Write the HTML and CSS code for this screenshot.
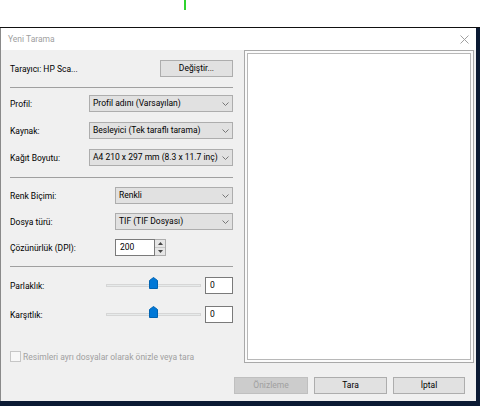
FILE: index.html
```html
<!DOCTYPE html>
<html lang="tr">
<head>
<meta charset="utf-8">
<title>Yeni Tarama</title>
<link rel="stylesheet" href="styles.css">
</head>
<body>
<div class="topstrip"><span class="green"></span></div>
<div class="screen">
  <div class="dialog">
    <div class="titlebar">
      <span class="title">Yeni Tarama</span>
      <svg class="close" width="9" height="9" viewBox="0 0 9 9"><path d="M0.5 0.5 L8.5 8.5 M8.5 0.5 L0.5 8.5" stroke="#a0a0a0" stroke-width="1"/></svg>
    </div>
    <div class="body">
      <div class="main">
        <div class="left">
          <div class="row scanner">
            <span class="label">Tarayıcı: HP Sca...</span>
            <button class="btn change">Değiştir...</button>
          </div>
          <div class="sep"></div>
          <div class="group g1">
            <span class="label">Profil:</span>
            <div class="select">Profil adını (Varsayılan)<svg class="chev" width="7" height="4" viewBox="0 0 7 4"><path d="M0.5 0.5 L3.5 3.5 L6.5 0.5" fill="none" stroke="#777" stroke-width="1"/></svg></div>
            <span class="label">Kaynak:</span>
            <div class="select">Besleyici (Tek taraflı tarama)<svg class="chev" width="7" height="4" viewBox="0 0 7 4"><path d="M0.5 0.5 L3.5 3.5 L6.5 0.5" fill="none" stroke="#777" stroke-width="1"/></svg></div>
            <span class="label">Kağıt Boyutu:</span>
            <div class="select">A4 210 x 297 mm (8.3 x 11.7 inç)<svg class="chev" width="7" height="4" viewBox="0 0 7 4"><path d="M0.5 0.5 L3.5 3.5 L6.5 0.5" fill="none" stroke="#777" stroke-width="1"/></svg></div>
          </div>
          <div class="sep sep2"></div>
          <div class="group g2">
            <span class="label">Renk Biçimi:</span>
            <div class="select">Renkli<svg class="chev" width="7" height="4" viewBox="0 0 7 4"><path d="M0.5 0.5 L3.5 3.5 L6.5 0.5" fill="none" stroke="#777" stroke-width="1"/></svg></div>
            <span class="label">Dosya türü:</span>
            <div class="select">TIF (TIF Dosyası)<svg class="chev" width="7" height="4" viewBox="0 0 7 4"><path d="M0.5 0.5 L3.5 3.5 L6.5 0.5" fill="none" stroke="#777" stroke-width="1"/></svg></div>
            <span class="label">Çözünürlük (DPI):</span>
            <div class="spinrow">
              <div class="spininput">200</div>
              <div class="spin">
                <span class="up"><svg width="5" height="3" viewBox="0 0 5 3"><path d="M0 3 L2.5 0 L5 3Z" fill="#444"/></svg></span>
                <span class="down"><svg width="5" height="3" viewBox="0 0 5 3"><path d="M0 0 L2.5 3 L5 0Z" fill="#444"/></svg></span>
              </div>
            </div>
          </div>
          <div class="sep sep3"></div>
          <div class="group g3">
            <span class="label">Parlaklık:</span>
            <div class="slider"><div class="track"></div><svg class="thumb" width="9" height="12" viewBox="0 0 9 12"><path d="M0.5 11.5 V3.5 L4.5 0.5 L8.5 3.5 V11.5 Z" fill="#0078d7" stroke="#0063b1" stroke-width="1"/></svg></div>
            <div class="numbox">0</div>
            <span class="label">Karşıtlık:</span>
            <div class="slider"><div class="track"></div><svg class="thumb" width="9" height="12" viewBox="0 0 9 12"><path d="M0.5 11.5 V3.5 L4.5 0.5 L8.5 3.5 V11.5 Z" fill="#0078d7" stroke="#0063b1" stroke-width="1"/></svg></div>
            <div class="numbox">0</div>
          </div>
          <label class="check"><span class="box"></span><span class="checktext">Resimleri ayrı dosyalar olarak önizle veya tara</span></label>
        </div>
        <div class="preview"><div class="preview-inner"></div></div>
      </div>
      <div class="footer">
        <button class="btn fbtn disabled">Önizleme</button>
        <button class="btn fbtn">Tara</button>
        <button class="btn fbtn last">İptal</button>
      </div>
    </div>
  </div>
  <div class="desktop"></div>
</div>
</body>
</html>
```
FILE: styles.css
```css
* { box-sizing: border-box; }
html, body { margin: 0; padding: 0; }
body {
  width: 480px;
  height: 406px;
  overflow: hidden;
  background: #0b1a33;
  font-family: Roboto, "Noto Sans", sans-serif;
  font-size: 8.5px;
  color: #000;
}
.topstrip {
  height: 27px;
  background: #fff;
  position: relative;
}
.green {
  position: absolute;
  left: 184px;
  top: 0;
  width: 2px;
  height: 10px;
  background: #2fd32f;
}
.screen {
  display: flex;
  height: 379px;
  border-top: 1px solid #111;
}
.dialog {
  width: 476px;
  height: 373px;
  background: #f0f0f0;
  display: flex;
  flex-direction: column;
  border-left: 1px solid #8a8a8a;
}
.desktop { flex: 1; }
.titlebar {
  height: 22px;
  background: #fff;
  display: flex;
  align-items: center;
  justify-content: space-between;
  padding: 0 7px 0 7px;
}
.title { color: #a0a0a0; }
.close { margin-top: 1px; }
.body { flex: 1; display: flex; flex-direction: column; }
.main { display: flex; height: 314px; }
.left {
  width: 243px;
  padding: 10px 11px 0 9px;
  display: flex;
  flex-direction: column;
}
.row.scanner {
  display: flex;
  justify-content: space-between;
  align-items: center;
  height: 17px;
}
.btn {
  font-family: inherit;
  font-size: 8.5px;
  background: #e1e1e1;
  border: 1px solid #adadad;
  color: #000;
  padding: 0;
  height: 17px;
  line-height: 15px;
}
.btn.change { width: 73px; }
.sep {
  height: 1px;
  background: #a0a0a0;
  margin: 10px 0 7px 0;
}
.sep2 { margin: 11px 0 9px 0; }
.sep3 { margin: 10px 0 10px 0; }
.group {
  display: grid;
  align-items: center;
}
.g1 { grid-template-columns: 79px 1fr; row-gap: 10px; }
.g2 { grid-template-columns: 105px 1fr; row-gap: 9px; }
.g3 { grid-template-columns: 92px 1fr 28px; column-gap: 4px; row-gap: 12px; }
.select {
  height: 17px;
  background: #e1e1e1;
  border: 1px solid #adadad;
  display: flex;
  align-items: center;
  justify-content: space-between;
  padding: 0 3px 0 3px;
  white-space: nowrap;
  line-height: 15px;
}
.chev { flex: none; }
.spinrow { display: flex; height: 17px; }
.spininput {
  width: 40px;
  height: 17px;
  background: #fff;
  border: 1px solid #7a7a7a;
  padding: 0 4px;
  line-height: 15px;
}
.spin {
  width: 11px;
  height: 17px;
  display: flex;
  flex-direction: column;
  border: 1px solid #adadad;
  border-left: none;
  background: #f0f0f0;
}
.spin span {
  flex: 1;
  display: flex;
  align-items: center;
  justify-content: center;
  background: #e6e6e6;
}
.spin .up { border-bottom: 1px solid #c8c8c8; }
.slider {
  height: 17px;
  display: flex;
  align-items: center;
  justify-content: center;
  position: relative;
}
.track {
  width: 100%;
  height: 3px;
  background: #e7eaea;
  border: 1px solid #d6d6d6;
}
.thumb { position: absolute; left: 43px; top: 0; }
.numbox {
  height: 17px;
  background: #fff;
  border: 1px solid #7a7a7a;
  padding: 0 4px;
  line-height: 15px;
}
.check {
  display: flex;
  align-items: center;
  margin-top: 28px;
  gap: 2px;
}
.box {
  width: 11px;
  height: 11px;
  border: 1px solid #c6c6c6;
  background: #f7f7f7;
}
.checktext { color: #a0a0a0; }
.preview {
  width: 230px;
  height: 313px;
  border: 1px solid #a9a9a9;
  background: #fbfbfb;
  padding: 2px;
}
.preview-inner {
  width: 100%;
  height: 100%;
  background: #fff;
  border: 1px solid #b8b8b8;
}
.footer {
  display: flex;
  gap: 6px;
  padding: 13px 0 0 233px;
}
.fbtn { width: 73px; }
.fbtn.disabled { background: #cccccc; border-color: #bfbfbf; color: #a0a0a0; width: 74px; }
.fbtn.last { width: 72px; }
```
